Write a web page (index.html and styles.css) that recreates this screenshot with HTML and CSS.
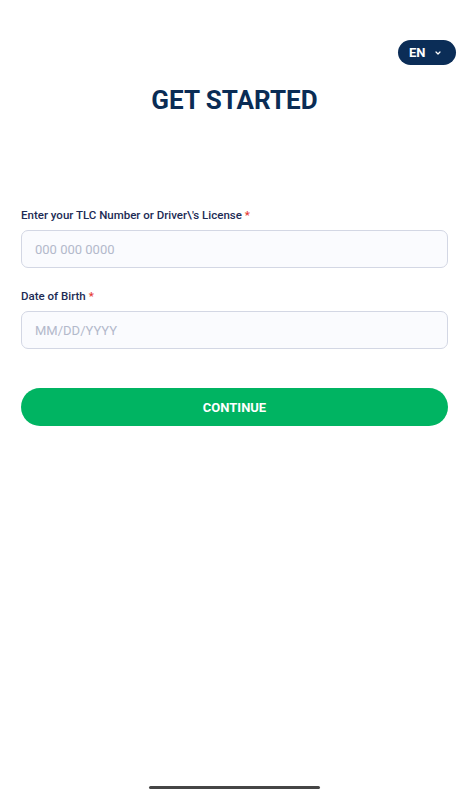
FILE: index.html
```html
<!DOCTYPE html>
<html lang="en">
<head>
    <meta charset="UTF-8">
    <meta name="viewport" content="width=device-width, initial-scale=1">
    <title>Get Started</title>
    <link rel="stylesheet" href="styles.css">
</head>
<body>

<main class="screen">
    <div class="topbar">
        <button class="lang">EN
            <svg width="8" height="6" viewBox="0 0 8 6"><path d="M2 2 4 4 6 2" fill="none" stroke="#fff" stroke-width="1.2" stroke-linecap="round" stroke-linejoin="round"/></svg>
        </button>
    </div>
    <h1 class="title">GET STARTED</h1>

    <form class="form">
        <div class="field">
            <label>Enter your TLC Number or Driver\'s License <span class="req">*</span></label>
            <input type="text" placeholder="000 000 0000">
        </div>
        <div class="field">
            <label>Date of Birth <span class="req">*</span></label>
            <input type="text" placeholder="MM/DD/YYYY">
        </div>
        <button type="button" class="btn">CONTINUE</button>
    </form>

    <div class="homebar"></div>
</main>

</body>
</html>
```

FILE: styles.css
```css
* {
    box-sizing: border-box;
}
body {
    margin: 0;
    font-family: Roboto, "Liberation Sans", sans-serif;
    background-color: white;
}
.screen {
    height: 800px;
    display: flex;
    flex-direction: column;
    padding: 40px 21px 0 21px;
}
.topbar {
    display: flex;
    justify-content: flex-end;
    margin-right: -8px;
}
.lang {
    display: flex;
    align-items: center;
    gap: 8px;
    height: 25px;
    width: 58px;
    padding: 0 0 0 11px;
    border: none;
    border-radius: 13px;
    background-color: #0b2d57;
    color: white;
    font-family: inherit;
    font-weight: 700;
    font-size: 13px;
}
.title {
    margin: 20px 0 0 0;
    text-align: center;
    color: #0a2c55;
    font-size: 26px;
    font-weight: 700;
    line-height: 30px;
}
.form {
    margin-top: 93px;
    display: flex;
    flex-direction: column;
}
.field {
    display: flex;
    flex-direction: column;
    margin-bottom: 21px;
}
.field label {
    font-size: 11.5px;
    font-weight: 500;
    color: #1c2b55;
    line-height: 14px;
    margin-bottom: 8px;
}
.req {
    color: #e53935;
}
.field input {
    height: 38px;
    border: 1px solid #d3d7e4;
    border-radius: 7px;
    background-color: #fafbfe;
    padding: 0 13px;
    font-family: inherit;
    font-size: 13px;
    color: #1c2b55;
    outline: none;
}
.field input::placeholder {
    color: #b3b9cb;
}
.btn {
    margin-top: 18px;
    height: 38px;
    border: none;
    border-radius: 19px;
    background-color: #00b462;
    color: white;
    font-family: inherit;
    font-weight: 700;
    font-size: 13px;
}
.homebar {
    margin-top: auto;
    margin-bottom: 11px;
    align-self: center;
    width: 171px;
    height: 3px;
    border-radius: 2px;
    background-color: #454545;
}
```
